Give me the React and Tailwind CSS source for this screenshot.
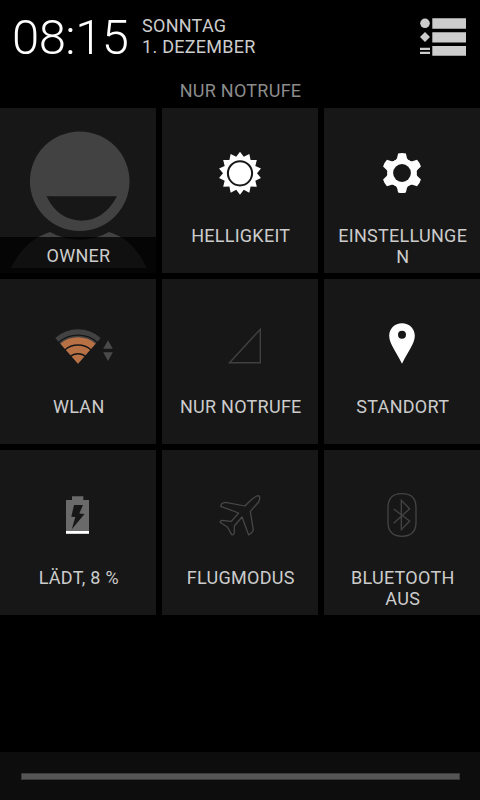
const TEETH = [0, 60, 120, 180, 240, 300];

// star outline with alternating outer / inner radius
function starPoints(cx, cy, count, outer, inner) {
  const pts = [];
  for (let i = 0; i < count * 2; i++) {
    const r = i % 2 === 0 ? outer : inner;
    const a = (Math.PI * i) / count - Math.PI / 2;
    pts.push(`${(cx + r * Math.cos(a)).toFixed(2)},${(cy + r * Math.sin(a)).toFixed(2)}`);
  }
  return pts.join(' ');
}

function Icon({ children }) {
  return (
    <svg width="72" height="60" viewBox="0 0 72 60" className="shrink-0" fill="none">
      {children}
    </svg>
  );
}

function BrightnessIcon() {
  return (
    <Icon>
      <polygon points={starPoints(36, 30.3, 14, 21.5, 17)} fill="#fff" />
      <circle cx="36" cy="30.3" r="12.1" stroke="#171717" strokeWidth="2" />
    </Icon>
  );
}

function SettingsIcon() {
  return (
    <Icon>
      {TEETH.map((deg) => (
        <path
          key={deg}
          d="M32.1 10.4Q36 9.4 39.9 10.4L41 15.2Q41.5 17 44 18L36 30L28 18Q30.5 17 31 15.2Z"
          fill="#fff"
          transform={`rotate(${deg} 36 30)`}
        />
      ))}
      <circle cx="36" cy="30" r="14.6" fill="#fff" />
      <circle cx="36" cy="30" r="8.9" fill="#171717" />
    </Icon>
  );
}

function WifiIcon() {
  return (
    <Icon>
      <path d="M36 49.7L13.3 23.9A34.4 34.4 0 0 1 58.7 23.9Z" fill="#424242" />
      <path d="M36 49.7L18.4 29.7A27.5 27.5 0 0 1 53.6 29.7Z" fill="#b87045" />
      <path d="M16.6 28.5A29.5 29.5 0 0 1 55.4 28.5" stroke="#171717" strokeWidth="1.3" />
      <path d="M22.5 36.2A20 20 0 0 1 49.5 36.2" stroke="#171717" strokeWidth="1.4" />
      <path d="M28 42.8A12 12 0 0 1 44 42.8" stroke="#171717" strokeWidth="1.4" />
      <path d="M66 26.3L70.8 34.8H61.2ZM61.2 38.3H70.8L66 47Z" fill="#4a4a4a" />
    </Icon>
  );
}

function SignalIcon() {
  return (
    <Icon>
      <path d="M25.5 48.7L56.3 15.2V48.7Z" stroke="#404040" strokeWidth="1.4" />
    </Icon>
  );
}

function LocationIcon() {
  return (
    <Icon>
      <path
        d="M36 9.2C28.8 9.2 23.2 14.6 23.2 21.8C23.2 29.5 30 37.5 36 49.7C42 37.5 48.8 29.5 48.8 21.8C48.8 14.6 43.2 9.2 36 9.2Z"
        fill="#fff"
      />
      <circle cx="36" cy="20.8" r="4" fill="#171717" />
    </Icon>
  );
}

function BatteryIcon() {
  return (
    <Icon>
      <path d="M24 15H30V11.3H41.3V15H47V46H24Z" fill="#6a6a6a" />
      <rect x="24" y="46" width="23" height="2.8" fill="#fff" />
      <path d="M32 20H41L37.3 28.5L42.5 29L29.8 44.3L33.3 32L29.3 31.7Z" fill="#171717" />
    </Icon>
  );
}

function AirplaneIcon() {
  return (
    <Icon>
      <path
        transform="translate(1 -5) scale(.3333)"
        d="M120 78L62 67Q48 68 47 79L101 99L79 124L51 121Q46 122 45 127L67 141L80 164Q87 166 88 158V138L111 111L131 165Q141 160 145 151L136 94L161 66Q168 48 160 47Q148 48 120 78Z"
        stroke="#484848"
        strokeWidth="3.8"
        strokeLinejoin="round"
      />
    </Icon>
  );
}

function BluetoothIcon() {
  return (
    <Icon>
      <g transform="translate(4 -5) scale(.3333)" stroke="#444444" strokeWidth="4">
        <path d="M96 41C124 41 138 53 138 83V127C138 157 124 169 96 169C68 169 54 157 54 127V83C54 53 68 41 96 41Z" />
        <path d="M71 87L119 123L94 149V61L119 86L71 130" />
      </g>
    </Icon>
  );
}

function Tile({ icon, label }) {
  return (
    <div className="flex h-[165px] flex-col items-center bg-[#171717] pt-[35px]">
      {icon}
      <div className="mt-[22px] w-[136px] pl-[1.5px] text-center break-all">{label}</div>
    </div>
  );
}

function OwnerTile() {
  return (
    <div className="relative h-[165px] bg-[#171717]">
      <svg width="156" height="165" viewBox="0 0 156 165" className="block">
        <circle cx="79.7" cy="73.3" r="49.8" fill="#424242" />
        <path d="M46.5 88.3H117Q104 112.7 81 112.7Q58 112 46.5 88.3Z" fill="#171717" />
        <path
          d="M50 124A60 60 0 0 0 109 124C126 129 138 141 146.5 160H11C20 141 34 129 50 124Z"
          fill="#424242"
        />
      </svg>
      <div className="absolute inset-x-0 bottom-0 h-9 bg-black/75 pt-2 pl-px text-center">OWNER</div>
    </div>
  );
}

function Header() {
  return (
    <header className="flex h-[74px] items-start pl-3 pr-[14px]">
      <div className="mt-[9px] text-[49px] leading-[57px] font-light tracking-[-0.5px] text-white">
        08:15
      </div>
      <div className="mt-[15px] ml-[13.5px] text-[#cccccc]">
        <div>SONNTAG</div>
        <div>1. DEZEMBER</div>
      </div>
      <svg width="46" height="38" viewBox="0 0 46 38" className="mt-[18px] ml-auto" fill="#cdcdcd">
        <circle cx="5" cy="5.3" r="4.8" />
        <path d="M5 14L10 19L5 24L0 19Z" />
        <path d="M0 29.7H10V32H0ZM0 33.7H10V36H0Z" />
        <path d="M12.3 0.3H46V10.7H12.3ZM12.3 14.2H46V24.5H12.3ZM12.3 28H46V37.8H12.3Z" />
      </svg>
    </header>
  );
}

export default function App() {
  return (
    <div className="flex h-[800px] w-[480px] flex-col overflow-hidden bg-black font-['Roboto',sans-serif] text-[18px] leading-[21px] tracking-[0.27px] text-[#cccccc]">
      <Header />
      <div className="h-[34px] pt-1.5 pl-px text-center text-[#8c8c8c]">NUR NOTRUFE</div>

      <div className="grid grid-cols-3 gap-1.5">
        <OwnerTile />
        <Tile icon={<BrightnessIcon />} label="HELLIGKEIT" />
        <Tile icon={<SettingsIcon />} label="EINSTELLUNGEN" />
        <Tile icon={<WifiIcon />} label="WLAN" />
        <Tile icon={<SignalIcon />} label="NUR NOTRUFE" />
        <Tile icon={<LocationIcon />} label="STANDORT" />
        <Tile icon={<BatteryIcon />} label="LÄDT, 8 %" />
        <Tile icon={<AirplaneIcon />} label="FLUGMODUS" />
        <Tile
          icon={<BluetoothIcon />}
          label={
            <>
              BLUETOOTH
              <br />
              AUS
            </>
          }
        />
      </div>

      {/* Drag handle */}
      <div className="mt-auto h-12 bg-[#0d0d0d] pr-5 pl-[21px] pt-[21px]">
        <div className="h-[7px] border border-[#3a3a3a] bg-[#555555]" />
      </div>
    </div>
  );
}
